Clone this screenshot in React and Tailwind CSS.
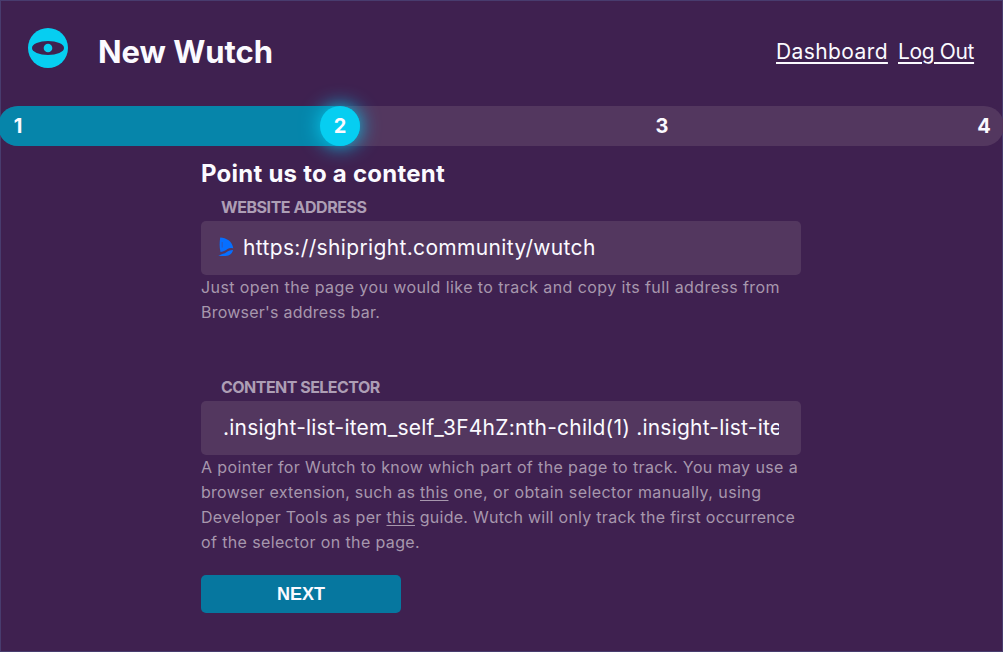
import React from "react";

function Logo() {
  return (
    <svg className="size-10 shrink-0" viewBox="0 0 40 40" aria-hidden="true">
      <circle cx="20" cy="20" r="20" fill="#06cef1" />
      <ellipse cx="20" cy="20" rx="16" ry="7" fill="#3f2150" />
      <circle cx="20" cy="20" r="4.3" fill="#06cef1" />
    </svg>
  );
}

function SiteIcon() {
  return (
    <svg className="h-5 w-4 shrink-0 -translate-y-px" viewBox="0 0 16 20" aria-hidden="true">
      <path
        d="M2.200 .5C8 .8 14.500 4 15.300 11.500C13.500 10.800 11.500 10.800 9.500 12C7.500 13.300 6 14.500 2.500 15C1.300 10 1.500 5 2.200 .5Z"
        fill="#066fff"
      />
      <path d="M.3 19C2 18.500 3 17.300 5 16.800C8.500 16 10.500 12.800 15 13C14 17 11 19 7.500 19Z" fill="#066fff" />
      <path d="M4.200 5V10.500" stroke="#3a50a8" strokeWidth=".8" />
    </svg>
  );
}

function Header() {
  return (
    <header className="flex h-[105px] items-start justify-between pt-[27px] pr-7 pl-[27px]">
      <div className="flex items-start">
        <Logo />
        <h1 className="ml-[30px] text-[31px] leading-[48px] font-bold tracking-[-0.05px] whitespace-nowrap">New Wutch</h1>
      </div>
      <nav className="flex gap-2.5 pt-[9px] text-[21px] leading-[30px] whitespace-nowrap">
        <a href="#dashboard" className="w-28 tracking-[0.4px] underline decoration-2 underline-offset-[3px]">Dashboard</a>
        <a href="#logout" className="w-[76px] tracking-[-0.36px] underline decoration-2 underline-offset-[3px]">Log Out</a>
      </nav>
    </header>
  );
}

function Progress() {
  return (
    <div className="-mr-[2px] -ml-[3px] grid h-10 grid-cols-1 rounded-full bg-[#53375f] text-xl font-bold">
      <div className="col-start-1 row-start-1 h-10 w-[362px] rounded-full bg-[#0685aa]" />
      <ol className="col-start-1 row-start-1 flex items-center justify-between">
        <li className="flex size-10 items-center justify-center">1</li>
        <li className="flex size-10 items-center justify-center rounded-full bg-[#06cef1] shadow-[0_0_20px_#06cef1]">2</li>
        <li className="flex size-10 items-center justify-center">3</li>
        <li className="flex size-10 items-center justify-center">4</li>
      </ol>
    </div>
  );
}

export default function App() {
  return (
    <div className="h-[652px] w-[1003px] overflow-hidden bg-[#3f2150] p-px font-[Inter,sans-serif] text-[#fbfaff] shadow-[inset_0_0_0_1px_#483c6e]">
      <Header />
      <Progress />
      <main className="ml-[200px] flex w-[600px] flex-col pt-[10px] whitespace-nowrap">
        <h2 className="text-2xl leading-9 font-bold tracking-[0.238px]">Point us to a content</h2>
        <label className="mt-[3px] pl-5 text-base leading-[25px] font-bold tracking-[-0.45px] text-[#ad9eb5]">WEBSITE ADDRESS</label>
        <div className="mt-px flex h-[54px] items-center rounded-[5px] bg-[#53375f] pl-[17px] text-[21px]">
          <SiteIcon />
          <span className="ml-[9px] tracking-[0.35px]">https://shipright.community/wutch</span>
        </div>
        <p className="flex flex-col text-base leading-[25px] text-[#a797ad]">
          <span className="tracking-[0.411px]">Just open the page you would like to track and copy its full address from</span>
          <span className="tracking-[0.237px]">Browser's address bar.</span>
        </p>
        <label className="mt-[50px] pl-5 text-base leading-[25px] font-bold tracking-[-0.53px] text-[#ad9eb5]">CONTENT SELECTOR</label>
        <div className="mt-px flex h-[54px] items-center rounded-[5px] bg-[#53375f] px-[22px] text-[21px]">
          <div className="w-[556px] overflow-hidden tracking-[0.21px]">.insight-list-item_self_3F4hZ:nth-child(1) .insight-list-ite</div>
        </div>
        <p className="flex flex-col text-base leading-[25px] text-[#a797ad]">
          <span className="tracking-[0.383px]">A pointer for Wutch to know which part of the page to track. You may use a</span>
          <span>
            <span className="tracking-[0.276px]">browser extension, such as </span>
            <a href="#extension" className="tracking-[0.371px] underline underline-offset-2">this</a>
            <span className="tracking-[0.42px]"> one, or obtain selector manually, using</span>
          </span>
          <span>
            <span className="tracking-[0.31px]">Developer Tools as per </span>
            <a href="#guide" className="tracking-[0.371px] underline underline-offset-2">this</a>
            <span className="tracking-[0.265px]"> guide. Wutch will only track the first occurrence</span>
          </span>
          <span className="tracking-[0.371px]">of the selector on the page.</span>
        </p>
        <button className="mt-5 h-[38px] w-[200px] rounded-[5px] bg-[#06779f] font-['Liberation_Sans',sans-serif] text-lg font-bold">NEXT</button>
      </main>
    </div>
  );
}
